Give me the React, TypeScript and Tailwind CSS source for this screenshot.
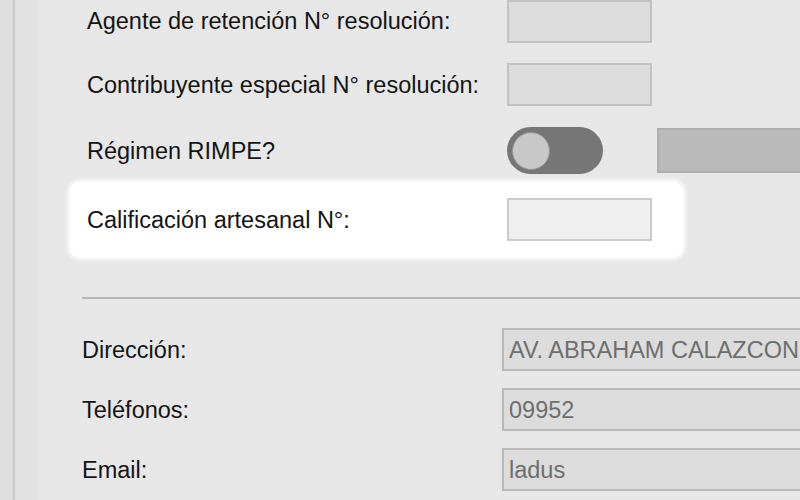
import type { ReactNode } from "react";

/* ---------- Small building blocks ---------- */
function FieldRow({
  label,
  children,
  className = "",
}: {
  label: string;
  children: ReactNode;
  className?: string;
}) {
  return (
    <div className={`flex items-center ${className}`}>
      <span className="w-[420px] shrink-0 whitespace-nowrap pt-[2px] text-[#141414]">{label}</span>
      {children}
    </div>
  );
}

function SmallBox({ light = false }: { light?: boolean }) {
  return (
    <div
      className={`h-[43px] w-[145px] border-2 ${
        light ? "border-[#cbcbcb] bg-[#efefef]" : "border-[#c2c2c2] bg-[#dcdcdc]"
      }`}
    />
  );
}

function ReadOnlyInput({ value }: { value: string }) {
  return (
    <div className="flex h-[43px] flex-1 items-center overflow-hidden whitespace-nowrap border-2 border-r-0 border-[#b8b8b8] bg-[#dcdcdc] pl-[5px] pt-[2px] text-[#6e6e6e]">
      {value}
    </div>
  );
}

function Toggle() {
  return (
    <div className="flex h-[47px] w-[96px] items-center rounded-full bg-[#767676] pl-[5px]">
      <div className="h-[38px] w-[38px] rounded-full border border-[#959595] bg-[#c8c8c8]" />
    </div>
  );
}

/* ---------- Page ---------- */
export default function App() {
  return (
    <div
      className="flex h-[500px] w-[800px] overflow-hidden bg-[#e7e7e7] text-[23.5px] leading-none"
      style={{ fontFamily: '"Liberation Sans", Arial, sans-serif' }}
    >
      {/* window edge */}
      <div className="w-[13px] shrink-0 bg-[#dedede]" />
      <div className="w-[2px] shrink-0 bg-[#c9c9c9]" />
      <div className="w-[22px] shrink-0 bg-[#e2e2e2]" />

      <div className="flex min-w-0 flex-1 flex-col">
        {/* tax section */}
        <div className="flex flex-col pl-[50px]">
          <FieldRow label="Agente de retención N° resolución:" className="h-[42px]">
            <SmallBox />
          </FieldRow>
          <FieldRow label="Contribuyente especial N° resolución:" className="mt-[21px] h-[43px]">
            <SmallBox />
          </FieldRow>
          <FieldRow label="Régimen RIMPE?" className="mt-[21px] h-[47px]">
            <Toggle />
            <div className="ml-[54px] h-[45px] flex-1 border-2 border-r-0 border-[#adadad] bg-[#bababa]" />
          </FieldRow>
        </div>

        {/* highlighted row */}
        <div className="ml-[33px] mt-[8px] flex h-[75px] w-[613px] items-center rounded-[10px] bg-white pl-[17px] shadow-[0_0_4px_2px_#ffffff]">
          <span className="w-[420px] shrink-0 whitespace-nowrap pt-[2px] text-[#141414]">
            Calificación artesanal N°:
          </span>
          <SmallBox light />
        </div>

        <div className="ml-[45px] mt-[40px] h-[2px] bg-[#b6b6b6]" />

        {/* contact section */}
        <div className="mt-[29px] flex flex-col gap-[17px] pl-[45px]">
          <FieldRow label="Dirección:">
            <ReadOnlyInput value="AV. ABRAHAM CALAZCON" />
          </FieldRow>
          <FieldRow label="Teléfonos:">
            <ReadOnlyInput value="09952" />
          </FieldRow>
          <FieldRow label="Email:">
            <ReadOnlyInput value="ladus" />
          </FieldRow>
        </div>
      </div>
    </div>
  );
}
